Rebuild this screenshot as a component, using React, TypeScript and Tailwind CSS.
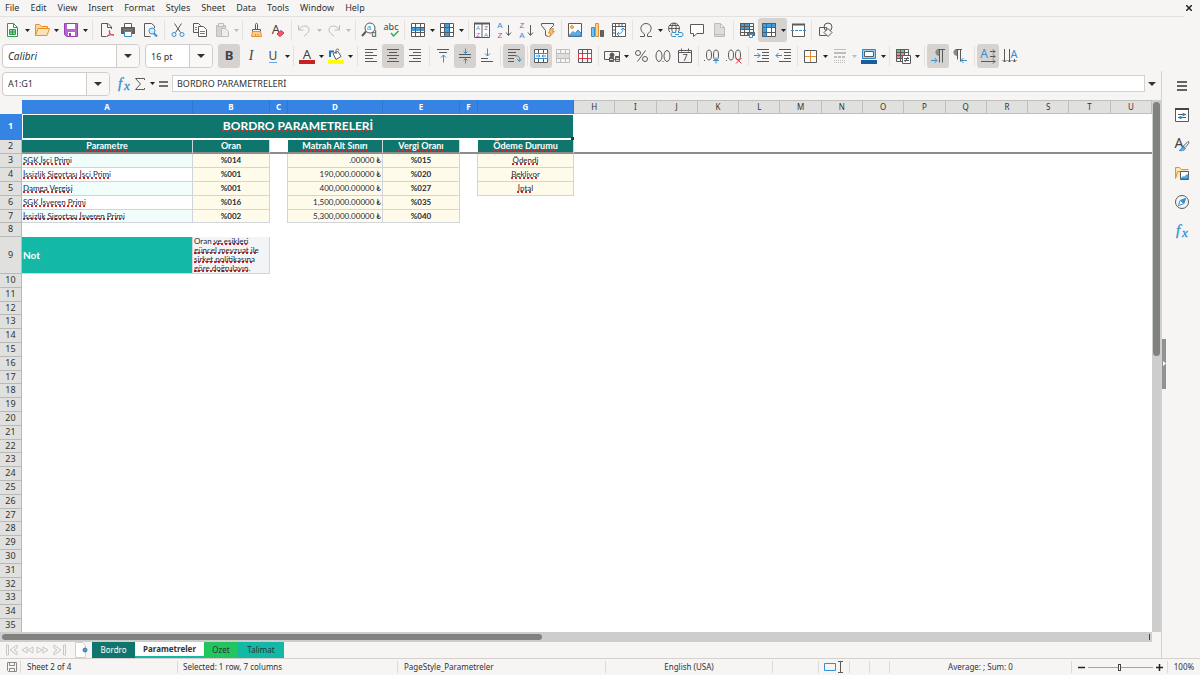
import { ReactNode } from "react";
import clsx from "clsx";

type ChildrenProps = { children?: ReactNode };

const GRAY = "#5a5a5a";
const BLUE = "#3290d3";
const ORANGE = "#e8912d";
const RED = "#dc3545";
const PURPLE = "#a44dc0";
const PALE = "#bdbdbd";

const Svg = ({ children }: ChildrenProps) => (
  <svg width="16" height="16" viewBox="0 0 16 16" fill="none" stroke={GRAY} strokeWidth="1" className="shrink-0 overflow-visible">
    {children}
  </svg>
);

type GlyphProps = { x: number; y: number; size: number; fill?: string; weight?: number; children: string };

const Glyph = ({ x, y, size, fill = "#444", weight = 400, children }: GlyphProps) => (
  <text x={x} y={y} fontSize={size} fill={fill} stroke="none" fontWeight={weight} fontFamily="Noto Sans, sans-serif" textAnchor="middle">
    {children}
  </text>
);

const SmallGlyph = ({ x, y, size, fill = "#444", children }: GlyphProps) => (
  <text x={x} y={y} fontSize={size} fill={fill} stroke="none" fontFamily="Liberation Sans, sans-serif" textAnchor="middle">
    {children}
  </text>
);

const FxGlyph = () => (
  <Svg>
    <text x="2" y="12" fontSize="15" fill={BLUE} stroke={BLUE} strokeWidth=".3" fontStyle="italic" fontFamily="Liberation Serif, serif">
      f
    </text>
    <text x="8" y="14" fontSize="13" fill={BLUE} stroke={BLUE} strokeWidth=".3" fontStyle="italic" fontFamily="Liberation Serif, serif">
      x
    </text>
  </Svg>
);

const Lines = ({ rows, stroke = GRAY }: { rows: [number, number, number][]; stroke?: string }) => (
  <path stroke={stroke} d={rows.map(([x, y, w]) => `M${x} ${y}h${w}`).join("")} />
);

const GridFrame = ({ stroke = GRAY }: { stroke?: string }) => (
  <path stroke={stroke} d="M1.5 1.5h13v13h-13zM1.5 5.5h13M1.5 10.5h13M5.5 1.5v13M10.5 1.5v13" />
);

const icons = {
  newSheet: (
    <Svg>
      <path stroke="#2b9a4b" fill="#fff" d="M2.500 1.500h6l4 4v9h-10z" />
      <path stroke="#2b9a4b" d="M8.500 1.500v4h4" />
      <path stroke="#2b9a4b" fill="#8ed3a1" d="M4.500 7.500h6v5h-6zM4.500 10h6M7.500 7.500v5" />
    </Svg>
  ),
  open: (
    <Svg>
      <path stroke={ORANGE} fill="#f9d79b" d="M1.500 13.500v-11h4l2 2h6v2" />
      <path stroke={ORANGE} fill="#fbe3b5" d="M1.500 13.500l2.500-7h11.500l-2.500 7z" />
    </Svg>
  ),
  save: (
    <Svg>
      <path stroke="#9a3fb5" fill="#b767ce" d="M1.500 1.500h13v13h-11l-2-2z" />
      <path stroke="none" fill="#fff" d="M4 2h8v5H4zM5 10h7v4H5z" />
      <path stroke="none" fill="#9a3fb5" d="M6 11h2v3H6z" />
    </Svg>
  ),
  pdf: (
    <Svg>
      <path d="M13.500 7V5l-3.500-3.500H3.500v13h5M9.500 1.500v4h4" />
      <path stroke={RED} d="M9 14.500c3-2 3-5 2.500-6-1 2 1 4.500 4.500 4.500-3-.5-5 0-7 1.500z" />
    </Svg>
  ),
  print: (
    <Svg>
      <path fill="#fff" d="M4.500 5V1.500h7V5" />
      <path fill="#666" d="M1.500 5.500h13v6h-13z" />
      <path stroke={BLUE} fill="#fff" d="M4.500 9.500h7v5h-7z" />
      <path stroke={BLUE} d="M3 7.500h10" />
    </Svg>
  ),
  preview: (
    <Svg>
      <path d="M12.500 6V4l-3-2.500h-7v13h6" />
      <circle cx="10" cy="9" r="3" stroke={BLUE} fill="#dceefa" />
      <path stroke={BLUE} strokeWidth="2" d="M12 11.500l3 3" />
    </Svg>
  ),
  cut: (
    <Svg>
      <path d="M4.500 1.500l6 9M11.500 1.500l-6 9" />
      <circle cx="4" cy="12.500" r="2" stroke={BLUE} />
      <circle cx="12" cy="12.500" r="2" stroke={BLUE} />
    </Svg>
  ),
  copy: (
    <Svg>
      <path d="M6 10.500H1.500v-9h5l2 2V4" />
      <path fill="#fff" d="M6.500 4.500h5l3 3v7h-8z" />
      <path stroke={BLUE} d="M3 5.500h2M3 7.500h2M8 9.500h5M8 11.500h5" />
    </Svg>
  ),
  paste: (
    <Svg>
      <path stroke={PALE} fill="#d4d4d4" d="M2.500 3.500h9v11h-9z" />
      <path stroke={PALE} fill="#eee" d="M4.500 1.500h5v3h-5zM7.500 6.500h4l3 3v5h-7z" />
    </Svg>
  ),
  cloneFormat: (
    <Svg>
      <path d="M7.500 7V2.500c0-1.500 2-1.500 2 0V7M4.500 7.500h8v2h-8z" />
      <path stroke={ORANGE} fill="#f7cf94" d="M4.500 9.500h8l1 5h-10zM7.500 12v2M10 12v2" />
    </Svg>
  ),
  clearFormat: (
    <Svg>
      <Glyph x={6} y={12} size={13}>A</Glyph>
      <path stroke={RED} fill="#ef5b6a" d="M7 12l4-3.500 3 2.500-4 3.500z" />
    </Svg>
  ),
  undo: (
    <Svg>
      <path stroke={PALE} d="M1.500 3v5h5M2 7.500c2-4 9-5 10-.5.5 3-2 5-5 7" />
    </Svg>
  ),
  redo: (
    <Svg>
      <path stroke={PALE} d="M13.500 3v5h-5M13 7.500c-2-4-9-5-10-.5-.5 3 2 5 5 7" />
    </Svg>
  ),
  find: (
    <Svg>
      <circle cx="9" cy="6" r="5" fill="#fff" />
      <path strokeWidth="2" d="M5 9.500l-4 4.500" />
      <SmallGlyph x={8} y={8} size={8} fill={BLUE}>a</SmallGlyph>
      <SmallGlyph x={13} y={15} size={9}>d</SmallGlyph>
    </Svg>
  ),
  spelling: (
    <Svg>
      <Glyph x={8} y={8} size={9}>abc</Glyph>
      <path stroke="#2fae5b" strokeWidth="1.500" d="M8 11l2.500 3 5-5" />
    </Svg>
  ),
  rows: (
    <Svg>
      <path stroke="none" fill="#fff" d="M1 1h14v14H1z" />
      <path stroke="none" fill="#3f9fe0" d="M1 5h14v4H1z" />
      <GridFrame />
    </Svg>
  ),
  columns: (
    <Svg>
      <path stroke="none" fill="#fff" d="M1 1h14v14H1z" />
      <path stroke="none" fill="#3f9fe0" d="M5 1h5v14H5z" />
      <GridFrame />
    </Svg>
  ),
  sort: (
    <Svg>
      <path fill="#fff" d="M.500 1.500h15v14H.500zM8 1.500v14" />
      <path strokeWidth="2" d="M0 1.500h16" />
      <SmallGlyph x={4} y={8} size={6} fill={BLUE}>A</SmallGlyph>
      <SmallGlyph x={4} y={15} size={6} fill={PURPLE}>Z</SmallGlyph>
      <SmallGlyph x={12} y={8} size={6} fill={PURPLE}>Z</SmallGlyph>
      <SmallGlyph x={12} y={15} size={6} fill={BLUE}>A</SmallGlyph>
    </Svg>
  ),
  sortAsc: (
    <Svg>
      <SmallGlyph x={4} y={6} size={8} fill={BLUE}>A</SmallGlyph>
      <SmallGlyph x={4} y={16} size={8} fill={PURPLE}>Z</SmallGlyph>
      <path d="M12.500 3v10M10 10.500l2.500 3 2.500-3" />
    </Svg>
  ),
  sortDesc: (
    <Svg>
      <SmallGlyph x={4} y={6} size={8} fill={PURPLE}>Z</SmallGlyph>
      <SmallGlyph x={4} y={16} size={8} fill={BLUE}>A</SmallGlyph>
      <path d="M12.500 3v10M10 10.500l2.500 3 2.500-3" />
    </Svg>
  ),
  filter: (
    <Svg>
      <path d="M1.500 1.500h12v2l-4 4M1.500 1.500v2l4 5v5l3 1" />
      <path stroke={ORANGE} fill="#f8c471" d="M10.500 7.500l3-1-1 3h2l-5 5.500 1-4h-2z" />
    </Svg>
  ),
  image: (
    <Svg>
      <path fill="#fff" d="M1.500 1.500h13v13h-13z" />
      <path stroke={BLUE} fill="#5fb0e6" d="M2 13.500l4-4 2 2 3-3.500 3 3v3H2z" />
      <circle cx="5" cy="5" r="1.500" stroke={ORANGE} fill="#f8c471" />
    </Svg>
  ),
  chart: (
    <Svg>
      <path stroke={BLUE} fill="#7cc0ec" d="M2.500 5.500h3v9h-3z" />
      <path stroke={ORANGE} fill="#fbd28b" d="M6.500 1.500h3v13h-3z" />
      <path fill="#666" d="M11.500 8.500h3v6h-3z" />
    </Svg>
  ),
  pivot: (
    <Svg>
      <path fill="#fff" d="M1.500 1.500h13v13h-13zM1.500 4.500h13M4.500 1.500v13M8 1.500v3M11 1.500v3M1.500 8h3M1.500 11h3" />
      <path stroke={BLUE} d="M12 6c0 4-2 6-6 6M10 8l2-2 2 2M8 10l-2 2 2 2" />
    </Svg>
  ),
  omega: (
    <Svg>
      <path d="M2 14.500h4.500V12C1 9 2 1.500 8 1.500S15 9 9.500 12v2.500H14" />
    </Svg>
  ),
  link: (
    <Svg>
      <circle cx="7" cy="6.500" r="5.500" />
      <path d="M1.500 6.500h11M2.500 3.500h9M7 1c-3 3-3 8 0 11M7 1c3 3 3 8 0 11" />
      <rect x="3" y="10" width="13" height="6" fill="#f6f5f4" stroke="none" />
      <path stroke={BLUE} d="M9 10.500H6a2 2 0 000 4h3M11 10.500h3a2 2 0 010 4h-3M8 12.500h4" />
    </Svg>
  ),
  comment: (
    <Svg>
      <path fill="#fff" d="M1.500 2.500h13v9H8l-3.500 3v-3h-3z" />
    </Svg>
  ),
  headerFooter: (
    <Svg>
      <path stroke={PALE} fill="#dcdcdc" d="M3.500 1.500h6l4 4v9h-10zM9.500 1.500v4h4" />
      <path stroke={PALE} d="M4 12.500h9" />
    </Svg>
  ),
  printArea: (
    <Svg>
      <path stroke="none" fill="#3f9fe0" d="M1 1h10v7H1z" />
      <path d="M1.500 1.500h13v12h-13zM1.500 4.500h13M1.500 7.500h13M1.500 10.500h13M5.500 1.500v12M10.500 1.500v12" />
      <path fill="#777" d="M8.500 10.500h7v3h-7z" />
      <path fill="#fff" stroke={BLUE} d="M10.500 12.500h3v3h-3z" />
    </Svg>
  ),
  freeze: (
    <Svg>
      <path stroke="none" fill="#fff" d="M1 1h14v14H1z" />
      <path stroke="none" fill="#3f9fe0" d="M1 1h14v4H1zM1 1h4v14H1z" />
      <GridFrame />
      <path stroke="#2374b5" d="M1.500 5.500h13M5.500 1.500v13" />
    </Svg>
  ),
  split: (
    <Svg>
      <path fill="#fff" d="M2.500 2.500h12v12h-12z" />
      <path strokeWidth="2" d="M2 2.500h13" />
      <path stroke={BLUE} strokeDasharray="3 1" d="M1 8.500h15" />
    </Svg>
  ),
  shapes: (
    <Svg>
      <path d="M2.500 5.500h7v8h-7z" />
      <circle cx="11" cy="5" r="4" />
      <path fill="#f6f5f4" d="M11 6.500l4 4-4 4-4-4z" />
    </Svg>
  ),
  bold: (
    <Svg>
      <Glyph x={8} y={12} size={13} weight={700}>B</Glyph>
    </Svg>
  ),
  italic: (
    <Svg>
      <text x="8" y="12" fontSize="14" fill="#444" stroke="none" fontStyle="italic" fontFamily="Liberation Serif, serif" textAnchor="middle">
        I
      </text>
    </Svg>
  ),
  underline: (
    <Svg>
      <Glyph x={8} y={12} size={12}>U</Glyph>
      <path stroke="#62a8e5" d="M4 14.500h8" />
    </Svg>
  ),
  fontColor: (
    <Svg>
      <Glyph x={8} y={11} size={13}>A</Glyph>
      <path stroke="#c9211e" strokeWidth="4" d="M0 14h16" />
    </Svg>
  ),
  fillColor: (
    <Svg>
      <path fill="#fff" d="M5 5.500l5-2 3 5-5 3zM8 6V2.500c0-2 3-2 3 0" />
      <path stroke="#2374b5" strokeWidth="2" d="M2 9V3.500h4" />
      <path stroke="#ffff00" strokeWidth="4" d="M0 14h16" />
    </Svg>
  ),
  alignLeft: (
    <Svg>
      <Lines rows={[[2, 1.5, 12], [2, 4.5, 8], [2, 7.5, 12], [2, 10.5, 8], [2, 13.5, 12]]} />
    </Svg>
  ),
  alignCenter: (
    <Svg>
      <Lines rows={[[2, 1.5, 12], [4, 4.5, 8], [2, 7.5, 12], [4, 10.5, 8], [2, 13.5, 12]]} />
    </Svg>
  ),
  alignRight: (
    <Svg>
      <Lines rows={[[2, 1.5, 12], [6, 4.5, 8], [2, 7.5, 12], [6, 10.5, 8], [2, 13.5, 12]]} />
    </Svg>
  ),
  alignTop: (
    <Svg>
      <Lines rows={[[2, 1.5, 12], [4, 4.5, 8]]} />
      <path stroke={BLUE} d="M8.500 14.500V7M6 9.500L8.500 7 11 9.500" />
    </Svg>
  ),
  alignMiddle: (
    <Svg>
      <Lines rows={[[2, 6.5, 12], [2, 9.5, 12]]} />
      <path stroke={BLUE} d="M8.500 .500v5M6.500 3.500l2 2 2-2M8.500 15.500v-5M6.500 12.500l2-2 2 2" />
    </Svg>
  ),
  alignBottom: (
    <Svg>
      <Lines rows={[[2, 10.5, 7], [2, 13.5, 12]]} />
      <path stroke={BLUE} d="M8.500 .500V8M6 5.500L8.500 8 11 5.500" />
    </Svg>
  ),
  wrap: (
    <Svg>
      <Lines rows={[[2, 1.5, 12], [2, 4.5, 8], [2, 7.5, 8], [2, 10.5, 6], [2, 13.5, 6]]} />
      <path stroke={BLUE} d="M9 8c3-1 5 1 4.500 5M11 11l2.500 2.500 2-3" />
    </Svg>
  ),
  mergeCenter: (
    <Svg>
      <path stroke="none" fill="#fff" d="M1 1h14v14H1z" />
      <GridFrame />
      <path stroke={BLUE} fill="#fff" d="M1.500 5.500h13v5h-13z" />
      <path stroke={BLUE} d="M3 8h4M9 8h4M5.500 6.500L7 8l-1.500 1.500M10.500 6.500L9 8l1.500 1.500" />
    </Svg>
  ),
  merge: (
    <Svg>
      <GridFrame stroke={PALE} />
      <path stroke={PALE} fill="#ddd" d="M1.500 5.500h13v5h-13z" />
    </Svg>
  ),
  unmerge: (
    <Svg>
      <path d="M1.500 14.500v-13h13v13zM5.500 1.500v4M10.500 1.500v4M5.500 10.500v4M10.500 10.500v4" />
      <path stroke={RED} fill="#fff" d="M1.500 5.500h13v5h-13zM5.500 5.500v5M10.500 5.500v5" />
    </Svg>
  ),
  currency: (
    <Svg>
      <path d="M.500 3.500h15v8H.500z" />
      <circle cx="8" cy="7" r="2" fill="#555" />
      <path fill="#666" d="M5.500 9.500h4v4h-4zM11.500 8.500h4v5h-4z" />
      <path stroke="#ddd" d="M6 11.500h3M12 10.500h3M12 12.500h3" />
    </Svg>
  ),
  percent: (
    <Svg>
      <circle cx="5" cy="5" r="2.500" />
      <circle cx="12" cy="11" r="2.500" />
      <path d="M12.500 2.500l-8 11" />
    </Svg>
  ),
  number: (
    <Svg>
      <ellipse cx="4" cy="8" rx="3" ry="5.500" />
      <ellipse cx="12" cy="8" rx="3" ry="5.500" />
      <path d="M7.500 13.500h1" />
    </Svg>
  ),
  date: (
    <Svg>
      <path d="M1.500 2.500h13v12h-13zM1.500 4.500h13M4.500 .500v3M11.500 .500v3" />
      <Glyph x={8} y={13} size={9}>7</Glyph>
    </Svg>
  ),
  addDecimal: (
    <Svg>
      <path d="M0 12.500h1" />
      <ellipse cx="5" cy="7" rx="2.500" ry="5" />
      <ellipse cx="12" cy="7" rx="2.500" ry="5" />
      <path stroke={BLUE} d="M9 12.500h6M12 9.500v6" />
    </Svg>
  ),
  removeDecimal: (
    <Svg>
      <path d="M0 12.500h1" />
      <ellipse cx="5" cy="7" rx="2.500" ry="5" />
      <ellipse cx="12" cy="7" rx="2.500" ry="5" />
      <path stroke={RED} d="M10 10l5.500 5.500M15.500 10L10 15.500" />
    </Svg>
  ),
  indent: (
    <Svg>
      <Lines rows={[[3, 1.5, 12], [8, 4.5, 7], [8, 7.5, 7], [8, 10.5, 7], [3, 13.5, 12]]} />
      <path stroke={BLUE} d="M0 7.500h6M3.500 5L6 7.500 3.500 10" />
    </Svg>
  ),
  outdent: (
    <Svg>
      <Lines rows={[[3, 1.5, 12], [8, 4.5, 7], [8, 7.5, 7], [8, 10.5, 7], [3, 13.5, 12]]} />
      <path stroke={BLUE} d="M0 7.500h6M2.500 5L0 7.500 2.500 10" />
    </Svg>
  ),
  borders: (
    <Svg>
      <path fill="#fff" d="M1.500 2.500h12v12h-12z" />
      <path stroke={ORANGE} d="M7.500 3v11M2 8.500h11" />
    </Svg>
  ),
  borderStyle: (
    <Svg>
      <path stroke={PALE} d="M2 1.500h12" />
      <path stroke={PALE} strokeWidth="2" d="M2 5h12" />
      <path stroke={PALE} strokeWidth="2" strokeDasharray="3 1" d="M2 9h12" />
      <path stroke={PALE} strokeDasharray="1 1" d="M2 12.500h12M2 14.500h12" />
    </Svg>
  ),
  borderColor: (
    <Svg>
      <path stroke="#2f86c9" fill="#9bd0f2" d="M1.500 1.500h13v9h-13z" />
      <path fill="#fff" d="M3.500 3.500h9v5h-9z" />
      <path stroke="#1c5c9c" strokeWidth="4" d="M0 14h16" />
    </Svg>
  ),
  conditional: (
    <Svg>
      <path stroke="none" fill="#6cc287" d="M1 1h9v4H1z" />
      <path stroke="none" fill="#ec8a8a" d="M1 5h9v5H1z" />
      <path d="M1.500 1.500h12v12h-12zM1.500 4.500h12M1.500 7.500h12M1.500 10.500h12M5.500 1.500v12M9.500 1.500v12" />
      <path fill="#fff" d="M7.500 7.500h8v8h-8z" />
      <path d="M9 10.500h5M9 12.500h5M13 9l-3 5" />
    </Svg>
  ),
  ltr: (
    <Svg>
      <path fill="#8a8a8a" stroke="none" d="M10 8C4 8 4 1 9 1h1z" />
      <path d="M8 1.500h7M9.500 1.500v13M12.500 1.500v13" />
      <path stroke={BLUE} d="M1 12.500h6M4.500 10L7 12.500 4.500 15" />
    </Svg>
  ),
  rtl: (
    <Svg>
      <path fill="#8a8a8a" stroke="none" d="M6 8C0 8 0 1 5 1h1z" />
      <path d="M4 1.500h6M5.500 1.500v10M8.500 1.500v12" />
      <path stroke={BLUE} d="M15 12.500H9M11.500 10L9 12.500l2.500 2.500" />
    </Svg>
  ),
  textHorizontal: (
    <Svg>
      <Glyph x={4} y={10} size={12} fill={BLUE}>A</Glyph>
      <path d="M10 3.500h5M13 1.500l2 2-2 2M10 8.500h5M13 6.500l2 2-2 2M1 13.500h14M13 11.500l2 2-2 2" />
    </Svg>
  ),
  textVertical: (
    <Svg>
      <Glyph x={12} y={10} size={11} fill={BLUE}>A</Glyph>
      <path d="M2.500 1v13M.500 12l2 2 2-2M7.500 1v13M5.500 12l2 2 2-2M12.500 11v3M10.500 12l2 2 2-2" />
    </Svg>
  ),
  sigma: (
    <Svg>
      <path d="M12.500 4V2.500h-9l5 5.500-5 5.500h9V12" />
    </Svg>
  ),
  equals: (
    <Svg>
      <path stroke="#444" strokeWidth="1.500" d="M3 6h9M3 10h9" />
    </Svg>
  ),
  menu: (
    <Svg>
      <path stroke="#333" d="M3 4h10M3 8h10M3 12h10" strokeWidth="1.500" />
    </Svg>
  ),
  properties: (
    <Svg>
      <path fill="#fff" d="M1.500 1.500h13v13h-13z" />
      <path stroke="#444" strokeWidth="2" d="M1 2h14" />
      <path d="M4 7.500h8M4 10.500h8" />
      <path stroke={BLUE} d="M9.500 6v3M6.500 9v3" strokeWidth="2" />
    </Svg>
  ),
  styles: (
    <Svg>
      <Glyph x={5} y={12} size={14}>A</Glyph>
      <path fill="#fff" d="M14 5.500c2 0 1 2-3 6l-2-1z" />
      <path stroke={BLUE} fill="#5fb0e6" d="M5 14.500c2 0 2-4 5-3s0 4-5 3z" />
    </Svg>
  ),
  gallery: (
    <Svg>
      <path stroke={ORANGE} fill="#fbe3b5" d="M1.500 13.500v-11h4l2 2h7M1.500 13.500l2-7h11" />
      <path fill="#fff" d="M6.500 6.500h8v8h-8z" />
      <path stroke={BLUE} fill="#5fb0e6" d="M7 13.500l2-2 1 1 3-3 1 1v3z" />
    </Svg>
  ),
  navigator: (
    <Svg>
      <circle cx="8" cy="8" r="6.500" />
      <path stroke={BLUE} fill="#fff" d="M11.500 4.500L10 9.500l-5.500 2L6 6.500z" />
      <path stroke={BLUE} fill={BLUE} d="M11 5L9.500 9 7 7z" />
    </Svg>
  ),
  addSheet: (
    <Svg>
      <path stroke="#cfcfcf" fill="#fff" d="M1.500 .500h7l3 3v12h-10z" />
      <circle cx="11" cy="8" r="2" stroke="#2f6fb0" fill="#fff" />
      <path stroke="#2f6fb0" d="M11 6v4M9 8h4" />
    </Svg>
  ),
  saved: (
    <Svg>
      <path stroke="#8a8a8a" d="M3.500 3.500h9v9h-8l-1-1zM5.500 3.500v3h5v-3M5.500 12.500v-3h5v3" />
    </Svg>
  ),
  fx: <FxGlyph />,
};

type IconName = keyof typeof icons;

type ToolProps = { icon: IconName; label: string; active?: boolean; menu?: boolean; dim?: boolean };

const Caret = ({ dim }: { dim?: boolean }) => (
  <svg width="5" height="3" viewBox="0 0 5 3" fill={dim ? PALE : "#222"}>
    <path d="M0 0h5L2.500 3z" />
  </svg>
);

const Tool = ({ icon, label, active, menu, dim }: ToolProps) => (
  <div className={clsx("flex h-6 items-center rounded-[3px]", active && "bg-[#d5d2cf]")}>
    <button type="button" aria-label={label} className="flex h-6 w-[22px] items-center justify-center">
      {icons[icon]}
    </button>
    {menu && (
      <button type="button" aria-label={`${label} options`} className="flex h-6 w-[7px] items-center justify-center pt-px">
        <Caret dim={dim} />
      </button>
    )}
  </div>
);

const Sep = ({ wide }: { wide?: boolean }) => (
  <div className={clsx("flex h-5 justify-center", wide ? "w-[6px]" : "w-[5px]")}>
    <span className="w-px bg-[#e4e2e0]" />
  </div>
);

type ComboProps = { label: string; value: string; className: string; inputClass?: string };

const Combo = ({ label, value, className, inputClass }: ComboProps) => (
  <div className={clsx("flex h-6 rounded-[4px] border border-[#cfccc9] bg-white", className)}>
    <input aria-label={label} defaultValue={value} className={clsx("w-0 min-w-0 grow px-[5px] outline-none", inputClass)} />
    <button
      type="button"
      aria-label={`${label} list`}
      className="flex w-[23px] items-center justify-center rounded-r-[3px] border-l border-[#cfccc9] bg-[#f9f8f7]"
    >
      <svg width="8" height="4" viewBox="0 0 8 4" fill="#333">
        <path d="M0 0h8L4 4z" />
      </svg>
    </button>
  </div>
);

const MenuBar = () => (
  <nav className="mr-4 flex h-[17px] items-center gap-px border-b border-[#e3e1df] text-[9px]">
    {["File", "Edit", "View", "Insert", "Format", "Styles", "Sheet", "Data", "Tools", "Window", "Help"].map((item) => (
      <button key={item} type="button" className="px-[5px] leading-3">
        {item}
      </button>
    ))}
    <button type="button" aria-label="Close" className="-mr-[11px] ml-auto flex w-3 justify-center">
      <svg width="6" height="6" viewBox="0 0 6 6" stroke="#222" strokeWidth="1.500">
        <path d="M0 0l6 6M6 0L0 6" />
      </svg>
    </button>
  </nav>
);

const StandardBar = () => (
  <div className="flex h-[27px] items-center pl-[2px]">
    <Tool icon="newSheet" label="New" menu />
    <Tool icon="open" label="Open" menu />
    <Tool icon="save" label="Save" menu />
    <Sep wide />
    <Tool icon="pdf" label="Export as PDF" />
    <Tool icon="print" label="Print" />
    <Tool icon="preview" label="Print preview" />
    <Sep wide />
    <Tool icon="cut" label="Cut" />
    <Tool icon="copy" label="Copy" />
    <Tool icon="paste" label="Paste" menu dim />
    <Sep />
    <Tool icon="cloneFormat" label="Clone formatting" />
    <Tool icon="clearFormat" label="Clear formatting" />
    <Sep />
    <Tool icon="undo" label="Undo" menu dim />
    <Tool icon="redo" label="Redo" menu dim />
    <Sep wide />
    <Tool icon="find" label="Find and replace" />
    <Tool icon="spelling" label="Spelling" />
    <Sep />
    <Tool icon="rows" label="Row" menu />
    <Tool icon="columns" label="Column" menu />
    <Sep wide />
    <Tool icon="sort" label="Sort" />
    <Tool icon="sortAsc" label="Sort ascending" />
    <Tool icon="sortDesc" label="Sort descending" />
    <Tool icon="filter" label="AutoFilter" />
    <Sep />
    <Tool icon="image" label="Insert image" />
    <Tool icon="chart" label="Insert chart" />
    <Tool icon="pivot" label="Pivot table" />
    <Sep />
    <Tool icon="omega" label="Special character" menu />
    <Tool icon="link" label="Hyperlink" />
    <Tool icon="comment" label="Comment" />
    <Tool icon="headerFooter" label="Headers and footers" />
    <Sep wide />
    <Tool icon="printArea" label="Define print area" />
    <Tool icon="freeze" label="Freeze rows and columns" menu active />
    <Tool icon="split" label="Split window" />
    <Sep />
    <Tool icon="shapes" label="Show draw functions" />
  </div>
);

const FormattingBar = () => (
  <div className="flex h-[27px] items-center pb-[2px] pl-[2px]">
    <Combo label="Font name" value="Calibri" className="w-[138px]" inputClass="text-[10px] italic" />
    <Combo label="Font size" value="16 pt" className="ml-[5px] mr-[5px] w-[68px]" inputClass="text-[9px]" />
    <Tool icon="bold" label="Bold" active />
    <Tool icon="italic" label="Italic" />
    <Tool icon="underline" label="Underline" menu />
    <Sep />
    <Tool icon="fontColor" label="Font color" menu />
    <Tool icon="fillColor" label="Background color" menu />
    <Sep wide />
    <Tool icon="alignLeft" label="Align left" />
    <Tool icon="alignCenter" label="Align center" active />
    <Tool icon="alignRight" label="Align right" />
    <Sep wide />
    <Tool icon="alignTop" label="Align top" />
    <Tool icon="alignMiddle" label="Center vertically" active />
    <Tool icon="alignBottom" label="Align bottom" />
    <Sep />
    <Tool icon="wrap" label="Wrap text" active />
    <Sep />
    <Tool icon="mergeCenter" label="Merge and center" active />
    <Tool icon="merge" label="Merge cells" />
    <Tool icon="unmerge" label="Unmerge cells" />
    <Sep />
    <Tool icon="currency" label="Currency" menu />
    <Tool icon="percent" label="Percent" />
    <Tool icon="number" label="Number" />
    <Tool icon="date" label="Date" />
    <Sep />
    <Tool icon="addDecimal" label="Add decimal place" />
    <Tool icon="removeDecimal" label="Delete decimal place" />
    <Sep wide />
    <Tool icon="indent" label="Increase indent" />
    <Tool icon="outdent" label="Decrease indent" />
    <Sep />
    <Tool icon="borders" label="Borders" menu />
    <Tool icon="borderStyle" label="Border style" menu dim />
    <Tool icon="borderColor" label="Border color" menu />
    <Sep />
    <Tool icon="conditional" label="Conditional" menu />
    <Sep wide />
    <Tool icon="ltr" label="Left to right" active />
    <Tool icon="rtl" label="Right to left" />
    <Sep wide />
    <Tool icon="textHorizontal" label="Text direction horizontal" active />
    <Tool icon="textVertical" label="Text direction vertical" />
  </div>
);

const FormulaBar = () => (
  <div className="flex h-[29px] items-center pb-[3px] pl-[2px]">
    <Combo label="Name box" value="A1:G1" className="w-[108px]" inputClass="text-[9px]" />
    <button type="button" aria-label="Function wizard" className="ml-[6px]">
      {icons.fx}
    </button>
    <button type="button" aria-label="Select function" className="flex items-center">
      {icons.sigma}
      <span className="flex w-2 justify-center">
        <Caret />
      </span>
    </button>
    <button type="button" aria-label="Formula">
      {icons.equals}
    </button>
    <input
      aria-label="Input line"
      defaultValue="BORDRO PARAMETRELERİ"
      className="h-[17px] min-w-0 grow border border-[#d4d1ce] bg-white px-1 text-[9px] outline-none"
    />
    <button type="button" aria-label="Expand formula bar" className="flex w-4 justify-center pr-[2px]">
      <svg width="8" height="4" viewBox="0 0 8 4" fill="#333">
        <path d="M0 0h8L4 4z" />
      </svg>
    </button>
  </div>
);

const Misspelled = ({ children }: ChildrenProps) => (
  <span className="underline decoration-[#dc2626] decoration-dotted decoration-2 underline-offset-0 [text-decoration-skip-ink:none]">
    {children}
  </span>
);

const wideColumns = ["H", "I", "J", "K", "L", "M", "N", "O", "P", "Q", "R", "S", "T", "U"];
const dataColumns = [
  { name: "A", width: "w-[171px]" },
  { name: "B", width: "w-[77px]" },
  { name: "C", width: "w-[18px]" },
  { name: "D", width: "w-[95px]" },
  { name: "E", width: "w-[77px]" },
  { name: "F", width: "w-[18px]" },
  { name: "G", width: "w-[96px]" },
];

const records = [
  { param: "SGK İşci Primi", rate: "%014", base: ".00000 ₺", tax: "%015", status: "Ödendi" },
  { param: "İssizlik Sigortası İşci Primi", rate: "%001", base: "190,000.00000 ₺", tax: "%020", status: "Bekliyor" },
  { param: "Damga Vergisi", rate: "%001", base: "400,000.00000 ₺", tax: "%027", status: "İptal" },
  { param: "SGK İşveren Primi", rate: "%016", base: "1,500,000.00000 ₺", tax: "%035" },
  { param: "İssizlik Sigortası İşveren Primi", rate: "%002", base: "5,300,000.00000 ₺", tax: "%040" },
];

// every fifth row is one pixel shorter at this zoom level
const rowHeight = (row: number) => (row % 5 === 2 ? "h-[13px]" : "h-[14px]");

const RowHead = ({ row, height, selected }: { row: number; height: string; selected?: boolean }) => (
  <th
    scope="row"
    className={clsx(
      "border-b border-r p-0 text-center font-['Noto_Sans',sans-serif] text-[9px] leading-[12px]",
      height,
      selected ? "border-[#3584e4] bg-[#3584e4] font-bold text-white" : "border-[#b9b9b8] bg-[#e0e0df] font-normal text-[#333]"
    )}
  >
    {row}
  </th>
);

const cell = "overflow-hidden whitespace-nowrap border-b border-r border-[#d1d5db] px-px py-0 leading-[12px]";
const headCell =
  "overflow-hidden whitespace-nowrap border-b-2 border-r border-b-[#8c8c8c] border-r-[#d1d5db] bg-[#0f766e] p-0 text-[9px] leading-[11px] font-bold text-white";
const emptyHead = "border-b-2 border-[#8c8c8c] p-0";

const Sheet = () => (
  <table className="w-full table-fixed border-separate border-spacing-0 font-['Lato','Noto_Sans',sans-serif] text-[8px] text-[#1f2937]">
    <colgroup>
      <col className="w-[22px]" />
      {dataColumns.map((c) => (
        <col key={c.name} className={c.width} />
      ))}
      {wideColumns.map((c) => (
        <col key={c} />
      ))}
    </colgroup>
    <thead className="font-['Noto_Sans',sans-serif] text-[8px] leading-[12px]">
      <tr>
        <td className="h-[14px] bg-[#f6f5f4] p-0" />
        {dataColumns.map((c) => (
          <th key={c.name} scope="col" className="border-r border-[#2f78d0] bg-[#3584e4] p-0 font-bold text-white">
            {c.name}
          </th>
        ))}
        {wideColumns.map((c) => (
          <th key={c} scope="col" className="border-b border-r border-t border-[#bfbfbe] bg-[#e0e0df] p-0 font-normal text-[#333]">
            {c}
          </th>
        ))}
      </tr>
    </thead>
    <tbody>
      <tr>
        <RowHead row={1} height="h-[26px]" selected />
        <td
          colSpan={7}
          className="relative border border-b-2 border-white bg-[#0f766e] p-0 text-center text-[12px] leading-[20px] font-bold text-white"
        >
          <Misspelled>BORDRO PARAMETRELERİ</Misspelled>
          <span className="absolute -bottom-[2px] -right-px size-[3px] bg-[#333]" />
        </td>
        <td colSpan={14} />
      </tr>
      <tr>
        <RowHead row={2} height="h-[14px]" />
        <th scope="col" className={headCell}>
          <Misspelled>Parametre</Misspelled>
        </th>
        <th scope="col" className={headCell}>Oran</th>
        <td className={emptyHead} />
        <th scope="col" className={headCell}>
          <Misspelled>Matrah Alt Sınırı</Misspelled>
        </th>
        <th scope="col" className={headCell}>
          <Misspelled>Vergi Oranı</Misspelled>
        </th>
        <td className={emptyHead} />
        <th scope="col" className={headCell}>
          <Misspelled>Ödeme Durumu</Misspelled>
        </th>
        <td colSpan={14} className={emptyHead} />
      </tr>
      {records.map((r, i) => (
        <tr key={r.param}>
          <RowHead row={i + 3} height={rowHeight(i + 3)} />
          <td className={clsx(cell, i % 2 === 0 && "bg-[#f0fdfa]")}>
            <Misspelled>{r.param}</Misspelled>
          </td>
          <td className={clsx(cell, "bg-[#fffbeb] text-center font-bold")}>{r.rate}</td>
          <td className="border-r border-[#d1d5db] p-0" />
          <td className={clsx(cell, "bg-[#fffbeb] text-right")}>{r.base}</td>
          <td className={clsx(cell, "bg-[#fffbeb] text-center font-bold")}>{r.tax}</td>
          <td className={clsx("p-0", r.status && "border-r border-[#d1d5db]")} />
          {r.status ? (
            <td className={clsx(cell, "bg-[#fffbeb] text-center")}>
              <Misspelled>{r.status}</Misspelled>
            </td>
          ) : (
            <td className="p-0" />
          )}
          <td colSpan={14} />
        </tr>
      ))}
      <tr>
        <RowHead row={8} height="h-[14px]" />
        <td colSpan={21} />
      </tr>
      <tr>
        <RowHead row={9} height="h-[36px]" />
        <td className={clsx(cell, "bg-[#14b8a6] text-[10px] font-bold text-white")}>Not</td>
        <td className="border-b border-r border-[#d1d5db] bg-[#f3f4f6] px-px py-0 leading-[9px]">
          <div className="whitespace-nowrap">
            Oran <Misspelled>ve eşikleri</Misspelled>
            <br />
            <Misspelled>güncel mevzuat ile</Misspelled>
            <br />
            <Misspelled>şirket politikasına</Misspelled>
            <br />
            <Misspelled>göre doğrulayın.</Misspelled>
          </div>
        </td>
        <td colSpan={19} />
      </tr>
      {Array.from({ length: 26 }, (_, i) => i + 10).map((row) => (
        <tr key={row}>
          <RowHead row={row} height={rowHeight(row)} />
          <td colSpan={21} />
        </tr>
      ))}
    </tbody>
  </table>
);

const SheetTabs = () => (
  <div className="flex h-[16px] items-stretch text-[8px] leading-[14px]">
    <button type="button" aria-label="Scroll sheets" className="ml-[5px] flex w-[62px] items-center">
      <svg width="62" height="12" viewBox="0 0 62 12" fill="none" stroke="#c9c7c5">
        <path d="M1.500 1v10h2V1zM12 1L5 6l7 5V8L9 6l3-2zM22 3l-5 3 5 3zM28 3l-5 3 5 3zM32 3v6l5-3zM38 3v6l5-3zM49 1l7 5-7 5V8l3-2-3-2zM58.500 1v10h2V1z" />
      </svg>
    </button>
    <button type="button" aria-label="Add sheet" className="flex w-[25px] items-center justify-end pr-[2px]">
      {icons.addSheet}
    </button>
    <button type="button" className="w-[43px] bg-[#0f766e] text-white">Bordro</button>
    <button type="button" className="w-[69px] border-b-2 border-[#14b8a6] bg-white font-bold">
      Parametreler
    </button>
    <button type="button" className="w-[34px] bg-[#22c55e]">Ozet</button>
    <button type="button" className="w-[46px] bg-[#14b8a6]">Talimat</button>
  </div>
);

const SideBar = () => (
  <aside className="flex w-[39px] shrink-0 border-l border-[#d4d1ce]">
    <button type="button" aria-label="Hide sidebar" className="mt-[268px] flex h-[50px] w-1 items-center justify-center bg-[#929292]">
      <svg width="3" height="5" viewBox="0 0 3 5" fill="#fff">
        <path d="M0 0l3 2.500L0 5z" />
      </svg>
    </button>
    <div className="flex grow flex-col items-center gap-[13px] pr-[3px] pt-[7px]">
      <button type="button" aria-label="Sidebar settings">{icons.menu}</button>
      <button type="button" aria-label="Properties">{icons.properties}</button>
      <button type="button" aria-label="Styles">{icons.styles}</button>
      <button type="button" aria-label="Gallery">{icons.gallery}</button>
      <button type="button" aria-label="Navigator">{icons.navigator}</button>
      <button type="button" aria-label="Functions">{icons.fx}</button>
    </div>
  </aside>
);

const statusCell = "flex h-3 items-center border-r border-[#dcdad8]";

const StatusBar = () => (
  <footer className="flex h-[17px] items-center border-t border-[#d4d1ce] pl-1 text-[8px]">
    <div className={clsx(statusCell, "w-[17px]")}>{icons.saved}</div>
    <div className={clsx(statusCell, "w-[157px] pl-[6px]")}>Sheet 2 of 4</div>
    <div className={clsx(statusCell, "w-[220px] pl-[5px]")}>Selected: 1 row, 7 columns</div>
    <div className={clsx(statusCell, "grow pl-[6px]")}>PageStyle_Parametreler</div>
    <div className={clsx(statusCell, "w-[167px] justify-center")}>English (USA)</div>
    <div className={clsx(statusCell, "w-[46px]")} />
    <div className={clsx(statusCell, "w-[31px] justify-center")}>
      <svg width="20" height="12" viewBox="0 0 20 12" fill="none" stroke={GRAY}>
        <path stroke={BLUE} d="M.500 2.500h11v7H.500z" />
        <path d="M14 .500h5M14 11.500h5M16.500 .500v11" />
      </svg>
    </div>
    <div className={clsx(statusCell, "w-5")} />
    <div className={clsx(statusCell, "w-5")} />
    <div className={clsx(statusCell, "w-[182px] justify-center")}>Average: ; Sum: 0</div>
    <div className={clsx(statusCell, "w-24 gap-[3px] pl-[6px]")}>
      <button type="button" aria-label="Zoom out">
        <svg width="7" height="7" viewBox="0 0 7 7" stroke="#222" strokeWidth="1.500">
          <path d="M0 3.500h7" />
        </svg>
      </button>
      <input
        type="range"
        aria-label="Zoom"
        defaultValue={48}
        className="h-3 w-[65px] appearance-none bg-[linear-gradient(#a3a3a3,#a3a3a3)] bg-[length:100%_1px] bg-center bg-no-repeat [&::-webkit-slider-thumb]:h-[7px] [&::-webkit-slider-thumb]:w-[3px] [&::-webkit-slider-thumb]:appearance-none [&::-webkit-slider-thumb]:border [&::-webkit-slider-thumb]:border-[#444] [&::-webkit-slider-thumb]:bg-white"
      />
      <button type="button" aria-label="Zoom in">
        <svg width="7" height="7" viewBox="0 0 7 7" stroke="#222" strokeWidth="1.500">
          <path d="M0 3.500h7M3.500 0v7" />
        </svg>
      </button>
    </div>
    <div className="w-8 text-center">100%</div>
  </footer>
);

export default function App() {
  return (
    <div className="flex h-screen flex-col overflow-hidden bg-[#f6f5f4] font-['Noto_Sans',sans-serif] text-[#2e3436]">
      <MenuBar />
      <StandardBar />
      <FormattingBar />
      <div className="flex min-h-0 grow">
        <div className="flex min-w-0 grow flex-col">
          <FormulaBar />
          <div className="flex min-h-0 grow">
            <main className="min-w-0 grow overflow-hidden bg-white">
              <Sheet />
            </main>
            <div className="w-[9px] shrink-0 bg-[#cdcdcd] px-px pt-[2px]">
              <div className="h-[48%] rounded-full bg-[#808280]" />
            </div>
          </div>
          <div className="mr-[9px] flex h-[10px] items-center justify-between bg-[#cdcdcd] px-[2px]">
            <div className="h-[6px] w-[47%] rounded-full bg-[#808280]" />
            <div className="h-[6px] w-px bg-[#444]" />
          </div>
          <SheetTabs />
        </div>
        <SideBar />
      </div>
      <StatusBar />
    </div>
  );
}
